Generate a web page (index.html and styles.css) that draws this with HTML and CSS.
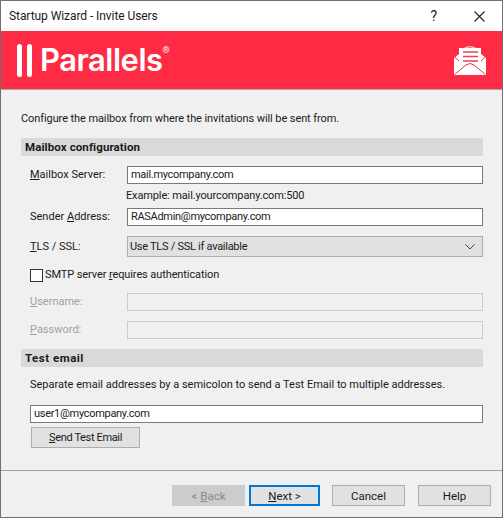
FILE: index.html

```html
<!DOCTYPE html>
<html lang="en">
<head>
  <meta charset="UTF-8">
  <title>Startup Wizard - Invite Users</title>
  <link rel="stylesheet" href="styles.css">
</head>
<body>
  <div class="window">
    <div class="titlebar">
      <span class="title">Startup Wizard - Invite Users</span>
      <span class="help-mark">?</span>
      <svg class="close" width="11" height="11" viewBox="0 0 11 11"><path d="M0.5 0.5L10.5 10.5M10.5 0.5L0.5 10.5" stroke="#222" stroke-width="1.1" fill="none"/></svg>
    </div>

    <div class="banner">
      <div class="logo">
        <span class="logo-bar"></span>
        <span class="logo-bar"></span>
        <span class="logo-text">Parallels</span>
        <span class="logo-reg">®</span>
      </div>
      <svg class="mail-icon" width="32" height="29" viewBox="0 0 32 29">
        <path d="M9 3Q16 -1.500 23 3" fill="none" stroke="#fff" stroke-width="1"/>
        <path d="M0 12L5 8V2H27V8L32 12V29H0Z" fill="#fff"/>
        <path d="M9 6H24M9 10.500H24M9 15H24" stroke="#e8405a" stroke-width="1.300"/>
        <path d="M0.500 11L5 15M31.500 11L27 15M0.500 28.500L12 19Q16 16 20 19L31.500 28.500" fill="none" stroke="#e8324f" stroke-width="1"/>
      </svg>
    </div>

    <div class="content">
      <p class="intro">Configure the mailbox from where the invitations will be sent from.</p>

      <div class="section">Mailbox configuration</div>

      <div class="row">
        <label class="row-label"><u>M</u>ailbox Server:</label>
        <div class="field">mail.mycompany.com</div>
      </div>
      <div class="hint">Example: mail.yourcompany.com:500</div>
      <div class="row">
        <label class="row-label">Sender <u>A</u>ddress:</label>
        <div class="field">RASAdmin@mycompany.com</div>
      </div>
      <div class="row row-select">
        <label class="row-label"><u>T</u>LS / SSL:</label>
        <div class="select">
          <span>Use TLS / SSL if available</span>
          <svg width="10" height="6" viewBox="0 0 10 6"><path d="M0.500 0.500L5 5L9.500 0.500" stroke="#444" fill="none"/></svg>
        </div>
      </div>

      <div class="check-row">
        <span class="checkbox"></span>
        <span>SMTP server <u>r</u>equires authentication</span>
      </div>

      <div class="row row-disabled">
        <label class="row-label"><u>U</u>sername:</label>
        <div class="field"></div>
      </div>
      <div class="row row-disabled row-password">
        <label class="row-label"><u>P</u>assword:</label>
        <div class="field"></div>
      </div>

      <div class="section section-test">Test email</div>
      <p class="separate">Separate email addresses by a semicolon to send a Test Email to multiple addresses.</p>
      <div class="field field-wide">user1@mycompany.com</div>
      <button class="btn btn-send"><u>S</u>end Test Email</button>
    </div>

    <div class="footer">
      <button class="btn btn-nav btn-back" disabled>&lt; <u>B</u>ack</button>
      <button class="btn btn-nav btn-next"><u>N</u>ext &gt;</button>
      <button class="btn btn-nav btn-cancel">Cancel</button>
      <button class="btn btn-nav">Help</button>
    </div>
  </div>
</body>
</html>
```

FILE: styles.css

```css
body {
  margin: 0;
  font-family: "Roboto", sans-serif;
  font-size: 11px;
  line-height: 18px;
  color: #1a1a1a;
}
.window {
  box-sizing: border-box;
  width: 503px;
  height: 518px;
  border: 1px solid #707070;
  background-color: #f0f0f0;
  display: flex;
  flex-direction: column;
}
.titlebar {
  height: 30px;
  background-color: #fff;
  display: flex;
  align-items: center;
  padding-left: 8px;
}
.title {
  flex: 1;
  font-size: 12px;
  letter-spacing: -0.07px;
}
.help-mark {
  font-size: 14px;
  margin-right: 37px;
}
.close {
  margin-right: 17px;
}
.banner {
  height: 58px;
  background-color: #ff2a44;
  border-bottom: 1px solid #a8a8a8;
  display: flex;
  align-items: center;
  justify-content: space-between;
  padding: 0 16px 0 16px;
}
.logo {
  display: flex;
  align-items: center;
  color: #fff;
}
.logo-bar {
  width: 5px;
  height: 33px;
  border-radius: 3px;
  background-color: #fff;
  margin-right: 5px;
}
.logo-text {
  font-family: "Inter", sans-serif;
  font-weight: 600;
  font-size: 31px;
  line-height: 34px;
  letter-spacing: -0.5px;
  margin-left: 3px;
}
.logo-reg {
  font-size: 9px;
  line-height: 8px;
  align-self: flex-start;
  margin: 3px 0 0 0;
}
.content {
  flex: 1;
  padding: 20px 19px 0 20px;
}
.intro {
  margin: 0 0 10px;
  letter-spacing: -0.09px;
}
.section {
  height: 18px;
  background-color: #d9d9d9;
  font-weight: 700;
  font-size: 11.500px;
  letter-spacing: 0.1px;
  padding-left: 4px;
  margin-bottom: 10px;
}
.row {
  display: grid;
  grid-template-columns: 97px 1fr;
  align-items: center;
  padding-left: 9px;
}
.row-label {
  display: block;
}
.field {
  box-sizing: border-box;
  height: 18px;
  background-color: #fff;
  border: 1px solid #7a7a7a;
  padding-left: 3px;
  line-height: 16px;
  letter-spacing: -0.3px;
}
.hint {
  height: 24px;
  line-height: 24px;
  padding-left: 105px;
  letter-spacing: -0.13px;
}
.row-select {
  margin-top: 10px;
}
.select {
  box-sizing: border-box;
  height: 21px;
  background-color: #e1e1e1;
  border: 1px solid #adadad;
  padding: 0 7px 0 2px;
  display: flex;
  align-items: center;
  justify-content: space-between;
  letter-spacing: -0.27px;
}
.check-row {
  display: flex;
  align-items: center;
  height: 18px;
  margin-top: 9px;
  padding-left: 9px;
  letter-spacing: -0.1px;
}
.checkbox {
  box-sizing: border-box;
  width: 13px;
  height: 13px;
  background-color: #fff;
  border: 1px solid #333;
  margin-right: 2px;
}
.row-disabled {
  margin-top: 9px;
  color: #a0a0a0;
}
.row-password {
  margin-top: 10px;
}
.row-disabled .field {
  background-color: #f0f0f0;
  border-color: #ccc;
}
.section-test {
  margin-top: 10px;
  margin-bottom: 0;
  letter-spacing: 0.5px;
}
.separate {
  margin: 9px 0 11px 9px;
}
.field-wide {
  margin-left: 9px;
}
.btn {
  box-sizing: border-box;
  height: 21px;
  padding: 0;
  background-color: #e1e1e1;
  border: 1px solid #adadad;
  font-family: inherit;
  font-size: 11px;
  line-height: 18px;
  color: #1a1a1a;
}
.btn-send {
  display: block;
  width: 109px;
  margin: 4px 0 0 10px;
  letter-spacing: -0.35px;
}
.footer {
  height: 47px;
  box-sizing: border-box;
  border-top: 1px solid #a0a0a0;
  padding: 14px 11px 0 171px;
  display: flex;
}
.btn-nav {
  width: 73px;
  font-size: 11.500px;
}
.btn-back {
  background-color: #ccc;
  border-color: #ccc;
  color: #8a8a8a;
  margin-right: 4px;
}
.btn-next {
  width: 71px;
  border: 2px solid #0078d7;
  margin-right: 12px;
}
.btn-cancel {
  margin-right: 13px;
}
```
